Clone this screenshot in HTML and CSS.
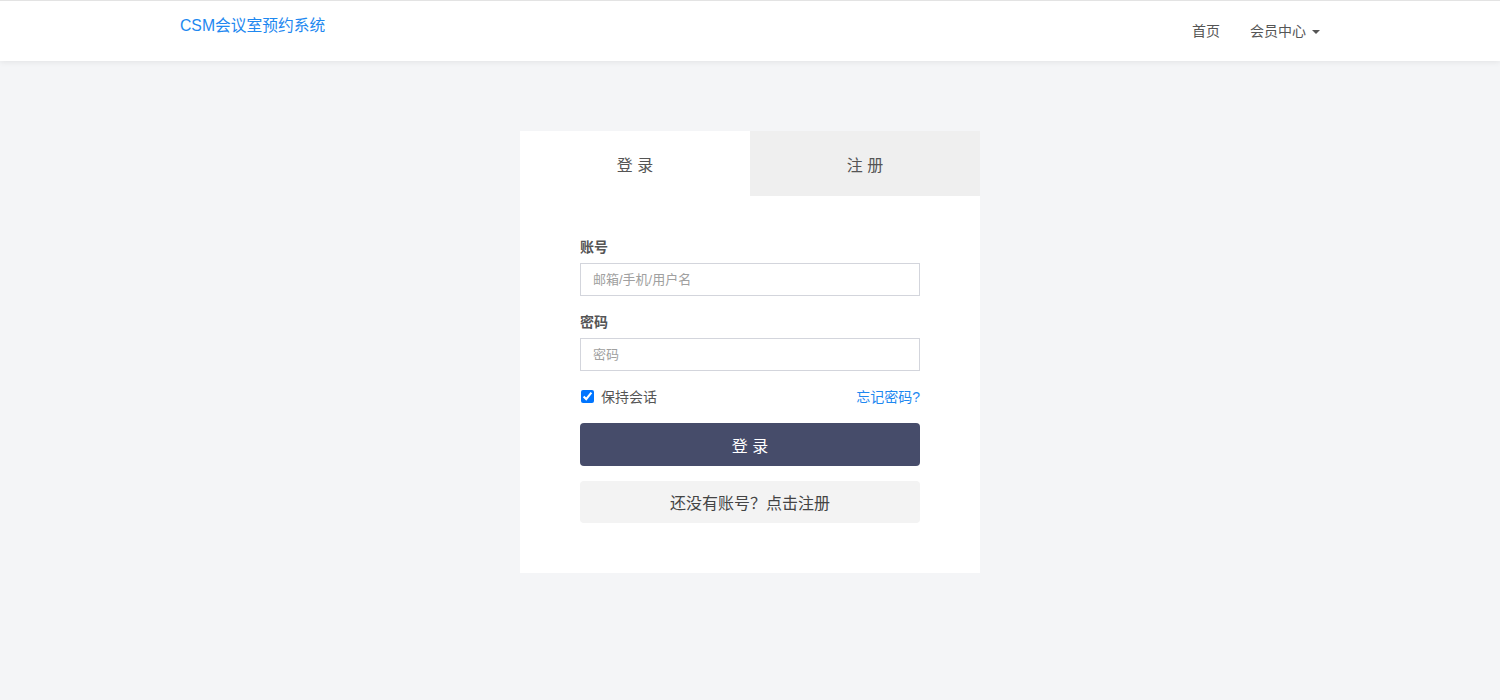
FILE: index.html
```html
<!DOCTYPE html>
<html lang="zh-CN">
<head>
<meta charset="utf-8">
<title>CSM会议室预约系统</title>
<link rel="stylesheet" href="styles.css">
</head>
<body>
<header class="navbar">
  <div class="container">
    <a class="brand" href="#">CSM会议室预约系统</a>
    <nav class="nav">
      <a class="nav-link" href="#">首页</a>
      <a class="nav-link" href="#">会员中心<span class="caret"></span></a>
    </nav>
  </div>
</header>
<main class="main">
  <section class="card">
    <div class="tabs">
      <div class="tab active">登 录</div>
      <div class="tab">注 册</div>
    </div>
    <form class="form">
      <label class="label">账号</label>
      <input class="input" type="text" placeholder="邮箱/手机/用户名">
      <label class="label">密码</label>
      <input class="input" type="password" placeholder="密码">
      <div class="row">
        <label class="check"><input type="checkbox" checked><span>保持会话</span></label>
        <a class="forgot" href="#">忘记密码?</a>
      </div>
      <button class="btn btn-primary" type="button">登 录</button>
      <button class="btn btn-light" type="button">还没有账号？点击注册</button>
    </form>
  </section>
</main>
</body>
</html>
```
FILE: styles.css
```css
* { box-sizing: border-box; }
html, body { margin: 0; padding: 0; }
body {
  background: #f4f5f7;
  font-family: "Liberation Sans", "Noto Sans CJK SC", sans-serif;
  font-size: 14px;
  color: #333;
  border-top: 1px solid #e3e3e3;
  min-height: 700px;
}
a { text-decoration: none; }
.navbar {
  background: #fff;
  height: 60px;
  box-shadow: 0 1px 6px rgba(0,0,0,0.08);
}
.container {
  width: 1140px;
  margin: 0 auto;
  display: flex;
  justify-content: space-between;
  align-items: flex-start;
  height: 60px;
}
.brand {
  color: #1e88f0;
  font-size: 15.75px;
  line-height: 20px;
  padding-top: 15px;
}
.nav { display: flex; margin-right: -15px; }
.nav-link {
  color: #555;
  font-size: 14px;
  line-height: 20px;
  padding: 20px 15px;
  display: flex;
  align-items: center;
}
.caret {
  display: inline-block;
  width: 0; height: 0;
  margin-left: 6px;
  margin-top: 1px;
  border-left: 4px solid transparent;
  border-right: 4px solid transparent;
  border-top: 4px solid #555;
}
.main {
  display: flex;
  justify-content: center;
  padding-top: 70px;
}
.card {
  width: 460px;
  background: #fff;
}
.tabs { display: flex; }
.tab {
  flex: 1;
  height: 65px;
  display: flex;
  align-items: center;
  justify-content: center;
  background: #efefef;
  color: #555;
  font-size: 16px;
}
.tab.active { background: #fff; }
.form {
  padding: 42px 60px 50px;
  display: flex;
  flex-direction: column;
}
.label {
  font-weight: bold;
  color: #555;
  font-size: 14px;
  line-height: 18px;
  margin-bottom: 7px;
}
.input {
  height: 33px;
  border: 1px solid #d3d5dc;
  padding: 0 12px;
  font-size: 13px;
  font-family: inherit;
  color: #555;
  margin-bottom: 17px;
  outline: none;
}
.input::placeholder { color: #a0a0a0; }
.row {
  display: flex;
  justify-content: space-between;
  align-items: center;
  height: 18px;
  margin-top: -1px;
  margin-bottom: 18px;
}
.check {
  display: flex;
  align-items: center;
  color: #555;
  font-size: 14px;
}
.check input {
  margin: 0 7px 0 1px;
  width: 13px; height: 13px;
}
.forgot { color: #1e88f0; font-size: 14px; }
.btn {
  height: 43px;
  border: none;
  border-radius: 4px;
  font-family: inherit;
  font-size: 16px;
  cursor: pointer;
}
.btn-primary {
  background: #464c6a;
  color: #fff;
}
.btn-light {
  margin-top: 15px;
  height: 42px;
  background: #f3f3f3;
  color: #444;
}
```
